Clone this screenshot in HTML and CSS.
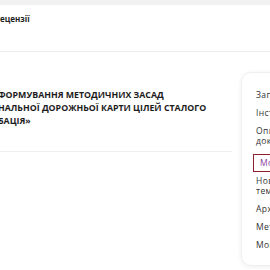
FILE: index.html
```html
<!DOCTYPE html>
<html lang="uk">
<head>
    <meta charset="UTF-8">
    <meta name="viewport" content="width=device-width, initial-scale=1.0">
    <title>Звіт</title>
    <link rel="stylesheet" href="styles.css">
</head>
<body>

    <div class="topstrip"></div>
    <div class="header">
        <span class="crumb">Рецензії</span>
    </div>

    <div class="content">
        <div class="main">
            <h1 class="title">
                ФОРМУВАННЯ МЕТОДИЧНИХ ЗАСАД<br>
                НАЛЬНОЇ ДОРОЖНЬОЇ КАРТИ ЦІЛЕЙ СТАЛОГО<br>
                БАЦІЯ»
            </h1>
            <div class="divider"></div>
        </div>

        <div class="card">
            <ul class="menu">
                <li>Загальна інформація</li>
                <li>Інститут</li>
                <li>Опис<br>документа</li>
                <li class="active">Монографія</li>
                <li>Новини<br>теми</li>
                <li>Архів</li>
                <li>Методика</li>
                <li>Моніторинг</li>
            </ul>
        </div>
    </div>

</body>
</html>
```

FILE: styles.css
```css
body{
    margin: 0;
    width: 270px;
    height: 270px;
    overflow: hidden;
    background: #fff;
    font-family: "Open Sans", "Liberation Sans", sans-serif;
    color: #222;
}

.topstrip{
    height: 5px;
    background: #f1f1f1;
}

.header{
    height: 46px;
    border-bottom: 1px solid #ededed;
    white-space: nowrap;
}
.crumb{
    display: inline-block;
    margin-left: -5px;
    margin-top: 4px;
    font-size: 8px;
    font-weight: bold;
    line-height: 10px;
    color: #222;
}

.content{
    display: flex;
    align-items: flex-start;
}

.main{
    width: 232px;
    flex-shrink: 0;
}
.title{
    margin: 37px 0 0 -2px;
    font-size: 8.8px;
    line-height: 13px;
    font-weight: bold;
    white-space: nowrap;
    color: #1c1c1c;
}
.divider{
    margin-top: 23px;
    height: 1px;
    background: #eeeeee;
}

.card{
    margin: 20px 0 0 9px;
    width: 80px;
    flex-shrink: 0;
    height: 192px;
    border: 1px solid #efefef;
    border-radius: 10px;
    box-shadow: 0 1px 5px rgba(0,0,0,0.07);
}

.menu{
    list-style: none;
    margin: 0;
    padding: 17px 0 0 11px;
    font-size: 8.5px;
    line-height: 10px;
    letter-spacing: 0.4px;
    white-space: nowrap;
}
.menu li{
    padding-left: 3px;
    margin-bottom: 8px;
    color: #333;
}
.menu li.active{
    margin-bottom: 4px;
    padding: 3px 0 3px 6px;
    border: 1.5px solid #8c1f2e;
    border-right: none;
    color: #8b3fa0;
}
```
